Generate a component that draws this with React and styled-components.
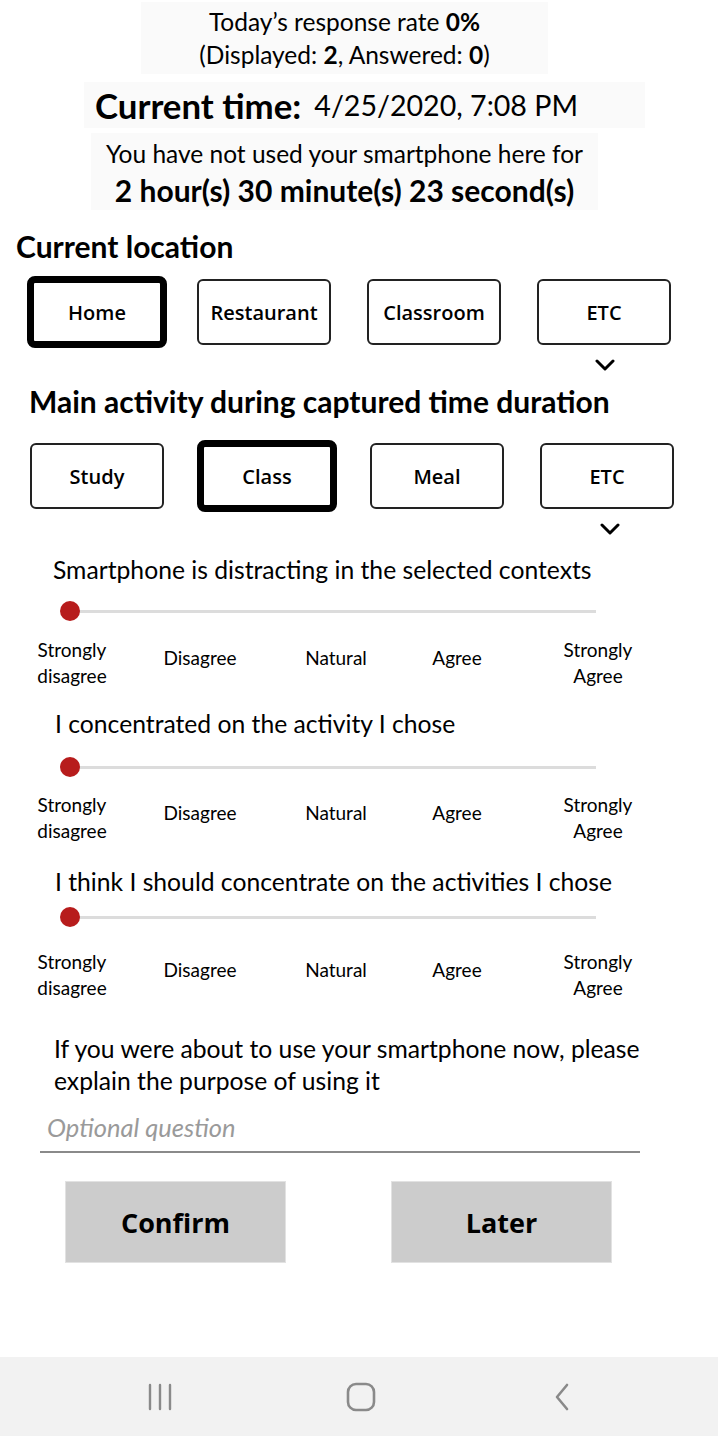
import styled, { createGlobalStyle } from "styled-components";

const GlobalStyle = createGlobalStyle`
  html, body {
    margin: 0;
    padding: 0;
    background: #fff;
  }
  body {
    font-family: "Lato", "Open Sans", sans-serif;
    color: #000;
  }
`;

const LABELS = [
  ["Strongly", "disagree"],
  ["Disagree"],
  ["Natural"],
  ["Agree"],
  ["Strongly", "Agree"],
];

// spacing between the question, the slider and the labels differs a little per item
const QUESTIONS = [
  { text: "Smartphone is distracting in the selected contexts", indent: 53, top: 16, trackGap: 16, labelGap: 16 },
  { text: "I concentrated on the activity I chose", indent: 55, top: 20, trackGap: 18, labelGap: 15 },
  { text: "I think I should concentrate on the activities I chose", indent: 55, top: 23, trackGap: 10, labelGap: 22 },
];

const Chevron = () => (
  <svg width="20" height="12" viewBox="0 0 20 12">
    <path d="M2 2 L10 10 L18 2" fill="none" stroke="#000" strokeWidth="3" strokeLinecap="round" strokeLinejoin="round" />
  </svg>
);

const ChoiceGroup = ({ title, items, selected, indent, titleIndent, titleTop, rowTop, columns, chevronRight }) => (
  <Section>
    <SectionTitle $indent={titleIndent} $top={titleTop}>
      {title}
    </SectionTitle>
    <ChoiceRow $indent={indent} $top={rowTop} $columns={columns}>
      {items.map((item) => (
        <Choice key={item} $active={item === selected}>
          {item}
        </Choice>
      ))}
    </ChoiceRow>
    <ChevronRow $right={chevronRight}>
      <Chevron />
    </ChevronRow>
  </Section>
);

const LikertItem = ({ text, indent, top, trackGap, labelGap }) => (
  <Likert $top={top}>
    <Question $indent={indent}>{text}</Question>
    <Track $gap={trackGap}>
      <Thumb />
    </Track>
    <Labels $gap={labelGap}>
      {LABELS.map((lines) => (
        <Label key={lines.join(" ")} $single={lines.length === 1}>
          {lines.map((l) => (
            <span key={l}>{l}</span>
          ))}
        </Label>
      ))}
    </Labels>
  </Likert>
);

const App = () => {
  return (
    <Page>
      <GlobalStyle />
      <Header>
        <StatBox>
          <div>
            Today’s response rate <b>0%</b>
          </div>
          <div>
            (Displayed: <b>2</b>, Answered: <b>0</b>)
          </div>
        </StatBox>
        <TimeBox>
          <TimeLabel>Current time:</TimeLabel>
          <TimeValue>4/25/2020, 7:08 PM</TimeValue>
        </TimeBox>
        <IdleBox>
          <div>You have not used your smartphone here for</div>
          <IdleValue>2 hour(s) 30 minute(s) 23 second(s)</IdleValue>
        </IdleBox>
      </Header>

      <ChoiceGroup
        title="Current location"
        titleIndent={16}
        titleTop={16}
        indent={27}
        rowTop={10}
        columns="170px 170px 170px 134px"
        items={["Home", "Restaurant", "Classroom", "ETC"]}
        selected="Home"
        chevronRight={103}
      />
      <ChoiceGroup
        title="Main activity during captured time duration"
        titleIndent={29}
        titleTop={6}
        indent={30}
        rowTop={19}
        columns="167px 173px 170px 134px"
        items={["Study", "Class", "Meal", "ETC"]}
        selected="Class"
        chevronRight={98}
      />

      <Survey>
        {QUESTIONS.map((q) => (
          <LikertItem key={q.text} {...q} />
        ))}
      </Survey>

      <FreeText>
        <Question $indent={54} $tall>
          If you were about to use your smartphone now, please
          <br />
          explain the purpose of using it
        </Question>
        <Field>
          <Input placeholder="Optional question" />
        </Field>
      </FreeText>

      <Actions>
        <ActionButton>Confirm</ActionButton>
        <ActionButton>Later</ActionButton>
      </Actions>

      <NavBar>
        <NavIcon>
          <svg width="26" height="28" viewBox="0 0 26 28">
            <g stroke="#8a8a8a" strokeWidth="2.4" strokeLinecap="round">
              <line x1="3" y1="2" x2="3" y2="26" />
              <line x1="13" y1="2" x2="13" y2="26" />
              <line x1="23" y1="2" x2="23" y2="26" />
            </g>
          </svg>
        </NavIcon>
        <NavIcon>
          <svg width="30" height="30" viewBox="0 0 30 30">
            <rect x="2" y="2" width="26" height="26" rx="8" fill="none" stroke="#8a8a8a" strokeWidth="2.6" />
          </svg>
        </NavIcon>
        <NavIcon>
          <svg width="18" height="30" viewBox="0 0 18 30">
            <path d="M14 3 L4 15 L14 27" fill="none" stroke="#8a8a8a" strokeWidth="2.6" strokeLinecap="round" strokeLinejoin="round" />
          </svg>
        </NavIcon>
      </NavBar>
    </Page>
  );
};

const Page = styled.div`
  width: 718px;
  min-height: 1436px;
  display: flex;
  flex-direction: column;
  overflow: hidden;
`;

const Header = styled.header`
  display: flex;
  flex-direction: column;
  align-items: center;
  padding-top: 2px;
`;

const StatBox = styled.div`
  width: 407px;
  height: 72px;
  margin-left: -29px;
  background: #fafafa;
  display: flex;
  flex-direction: column;
  justify-content: center;
  align-items: center;
  font-size: 24.5px;
  line-height: 33px;
`;

const TimeBox = styled.div`
  width: 561px;
  height: 46px;
  margin-top: 8px;
  margin-left: 11px;
  background: #fafafa;
  display: flex;
  align-items: center;
  gap: 13px;
  padding-left: 11px;
  box-sizing: border-box;
  white-space: nowrap;
`;

const TimeLabel = styled.span`
  font-size: 34.8px;
  font-weight: 700;
`;

const TimeValue = styled.span`
  font-size: 28.6px;
`;

const IdleBox = styled.div`
  width: 507px;
  height: 77px;
  margin-top: 5px;
  margin-left: -29px;
  background: #fafafa;
  display: flex;
  flex-direction: column;
  align-items: center;
  justify-content: center;
  font-size: 24.5px;
  line-height: 36px;
  white-space: nowrap;
`;

const IdleValue = styled.div`
  font-size: 30px;
  font-weight: 700;
`;

const Section = styled.section`
  display: flex;
  flex-direction: column;
`;

const SectionTitle = styled.h2`
  margin: ${({ $top }) => $top}px 0 0;
  padding-left: ${({ $indent }) => $indent}px;
  font-size: 30px;
  font-weight: 700;
  line-height: 40px;
  white-space: nowrap;
`;

const ChoiceRow = styled.div`
  display: grid;
  grid-template-columns: ${({ $columns }) => $columns};
  align-items: center;
  justify-items: start;
  padding-left: ${({ $indent }) => $indent}px;
  height: 72px;
  margin-top: ${({ $top }) => $top}px;
`;

const Choice = styled.button`
  box-sizing: border-box;
  width: ${({ $active }) => ($active ? 140 : 134)}px;
  height: ${({ $active }) => ($active ? 72 : 66)}px;
  border: ${({ $active }) => ($active ? "7px solid #000" : "2px solid #222")};
  border-radius: ${({ $active }) => ($active ? 8 : 6)}px;
  background: #fff;
  font-family: "Open Sans", "Lato", sans-serif;
  font-size: 20px;
  font-weight: 600;
  color: #000;
  padding: 0;
`;

const ChevronRow = styled.div`
  display: flex;
  justify-content: flex-end;
  align-items: center;
  padding-right: ${({ $right }) => $right}px;
  height: 20px;
  margin-top: 7px;
`;

const Survey = styled.div`
  display: flex;
  flex-direction: column;
`;

const Likert = styled.div`
  display: flex;
  flex-direction: column;
  margin-top: ${({ $top }) => $top}px;
`;

const Question = styled.div`
  padding-left: ${({ $indent }) => $indent}px;
  font-size: 24.7px;
  line-height: ${({ $tall }) => ($tall ? 32 : 30)}px;
  white-space: nowrap;
`;

const Track = styled.div`
  position: relative;
  margin: ${({ $gap }) => $gap}px 0 0 70px;
  width: 526px;
  height: 20px;
  display: flex;
  align-items: center;

  &::before {
    content: "";
    flex: 1;
    height: 3px;
    background: #dcdcdc;
  }
`;

const Thumb = styled.span`
  position: absolute;
  left: -10px;
  top: 0;
  width: 20px;
  height: 20px;
  border-radius: 50%;
  background: #b71c1c;
`;

const Labels = styled.div`
  display: grid;
  grid-template-columns: 128px 136px 121px 141px 100px;
  align-items: start;
  padding-left: 22px;
  margin-top: ${({ $gap }) => $gap}px;
  height: 52px;
`;

const Label = styled.div`
  width: 100px;
  display: flex;
  flex-direction: column;
  align-items: center;
  padding-top: ${({ $single }) => ($single ? 8 : 0)}px;
  font-size: 19px;
  line-height: 26px;
`;

const FreeText = styled.div`
  display: flex;
  flex-direction: column;
  margin-top: 32px;
`;

const Field = styled.div`
  margin: 14px 0 0 40px;
  width: 600px;
  border-bottom: 2px solid #8a8a8a;
`;

const Input = styled.input`
  width: 100%;
  box-sizing: border-box;
  border: none;
  outline: none;
  background: transparent;
  padding: 0 0 8px 7px;
  font-family: "Lato", sans-serif;
  font-size: 25.5px;
  font-style: italic;
  line-height: 32px;

  &::placeholder {
    color: #9a9a9a;
  }
`;

const Actions = styled.div`
  display: flex;
  gap: 105px;
  padding-left: 65px;
  margin-top: 28px;
`;

const ActionButton = styled.button`
  width: 221px;
  height: 82px;
  background: #cccccc;
  border: 1px solid #e2e2e2;
  font-family: "Open Sans", "Lato", sans-serif;
  font-size: 27px;
  font-weight: 700;
  color: #000;
`;

const NavBar = styled.nav`
  margin-top: auto;
  height: 79px;
  background: #f2f2f2;
  display: grid;
  grid-template-columns: 1fr 1fr 1fr;
  align-items: center;
  justify-items: center;
  padding: 0 56px 0 60px;
  box-sizing: border-box;
`;

const NavIcon = styled.div`
  display: flex;
  align-items: center;
  justify-content: center;
`;

export default App;
